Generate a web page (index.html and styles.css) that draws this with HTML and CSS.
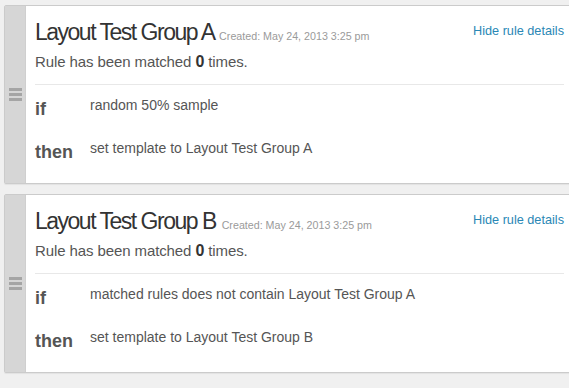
FILE: index.html
```html
<!DOCTYPE html>
<html lang="en">
<head>
  <meta charset="UTF-8">
  <meta name="viewport" content="width=device-width, initial-scale=1.0">
  <title>Rules</title>
  <link rel="stylesheet" href="styles.css">
</head>
<body>
  <div class="rule">
    <div class="handle"><span></span><span></span><span></span></div>
    <div class="rule-body">
      <div class="rule-head">
        <h2>Layout Test Group A <small>Created: May 24, 2013 3:25 pm</small></h2>
        <a href="#" class="toggle">Hide rule details</a>
      </div>
      <p class="count">Rule has been matched <b>0</b> times.</p>
      <div class="details">
        <div class="row"><span class="kw">if</span><span class="val">random 50% sample</span></div>
        <div class="row"><span class="kw">then</span><span class="val">set template to Layout Test Group A</span></div>
      </div>
    </div>
  </div>

  <div class="rule">
    <div class="handle"><span></span><span></span><span></span></div>
    <div class="rule-body">
      <div class="rule-head">
        <h2>Layout Test Group B <small>Created: May 24, 2013 3:25 pm</small></h2>
        <a href="#" class="toggle">Hide rule details</a>
      </div>
      <p class="count">Rule has been matched <b>0</b> times.</p>
      <div class="details">
        <div class="row"><span class="kw">if</span><span class="val">matched rules does not contain Layout Test Group A</span></div>
        <div class="row"><span class="kw">then</span><span class="val">set template to Layout Test Group B</span></div>
      </div>
    </div>
  </div>
</body>
</html>
```

FILE: styles.css
```css
body { font-family: "Liberation Sans", Arial, sans-serif; margin: 0; padding: 5px 0 0 4px; background: #f0f0f0; color: #555; overflow: hidden; }
.rule { display: flex; width: 575px; height: 177px; margin-bottom: 10px; background: #fff; border: 1px solid #cbcbcb; border-radius: 2px; box-shadow: 0 1px 1px rgba(0,0,0,0.06); }
.handle { width: 20px; background: #d6d6d6; border-right: 1px solid #cfcfcf; display: flex; flex-direction: column; justify-content: center; align-items: center; gap: 2px; }
.handle span { display: block; width: 13px; height: 3px; background: #a5a5a5; }
.rule-body { flex: 1; padding: 0 16px 0 9px; }
.rule-head { display: flex; justify-content: space-between; align-items: flex-start; }
h2 { margin: 12px 0 0; font-size: 23px; font-weight: normal; color: #333; letter-spacing: -1.5px; line-height: 29px; }
h2 small { font-size: 10.7px; color: #9a9a9a; letter-spacing: 0; margin-left: 1px; }
.toggle { margin-top: 18px; font-size: 12.7px; color: #2a87b5; text-decoration: none; }
.count { margin: 2px 0 0; font-size: 15px; line-height: 18px; letter-spacing: -0.1px; padding-bottom: 13px; border-bottom: 1px solid #e8e8e8; }
.count b { color: #333; font-size: 16px; }
.details { padding-top: 12px; }
.row { display: flex; align-items: flex-start; height: 43px; }
.kw { width: 55px; font-size: 18px; font-weight: bold; color: #555; padding-top: 2px; }
.val { font-size: 14px; color: #555; }
```
